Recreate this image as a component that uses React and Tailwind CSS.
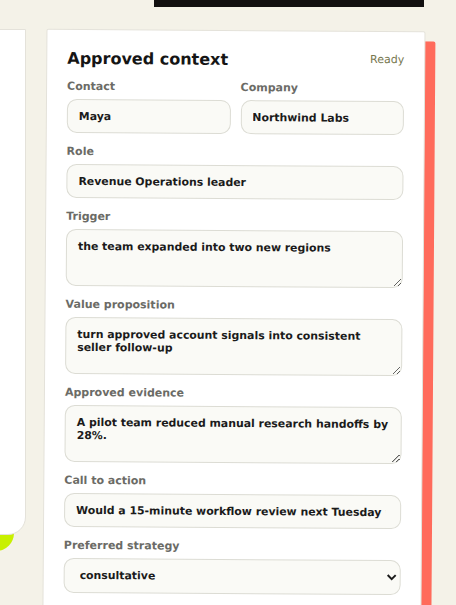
import React from "react";

function Field({ label, children }) {
  return (
    <div className="flex flex-col">
      <label className="block text-[11px] leading-[13px] font-bold text-[#6b6b66] mb-[6px]">{label}</label>
      {children}
    </div>
  );
}

const inputCls =
  "block w-full h-[34px] rounded-[10px] border border-[#dcdcd4] bg-[#fafaf6] pl-[11px] pr-[15px] text-[10.9px] leading-[13px] font-bold text-[#1b1b1b] outline-none";
const areaCls =
  "block w-full h-[57px] rounded-[10px] border border-[#dcdcd4] bg-[#fafaf6] pl-[11px] pr-[7px] py-[10px] text-[10.9px] leading-[13px] font-bold text-[#1b1b1b] outline-none resize-y";

export default function App() {
  return (
    <div className="h-[605px] bg-[#f4f2e8] overflow-hidden font-['DejaVu_Sans',sans-serif]">
      <div className="ml-[154px] w-[270px] h-[7px] bg-[#121010]" />
      <div className="flex items-start mt-[22px]">
        <div className="shrink-0 -ml-[300px] w-[326px] h-[506px] bg-white border border-[#e4e2da] rounded-br-[18px] shadow-[-12px_16px_0_#c8f000]" />
        <div className="shrink-0 ml-[20px] mt-[1px] w-[379px] bg-white border border-[#e4e2da] rounded-[2px] shadow-[10px_10px_0_#ff6b5b] px-[20px] pt-[19px] pb-[40px] rotate-[0.4deg] origin-[50%_70px]">
          <div className="flex justify-between items-start">
            <h2 className="text-[16px] leading-[20px] font-bold text-[#151515]">Approved context</h2>
            <span className="pt-[2px] text-[11px] leading-[13px] text-[#77774f]">Ready</span>
          </div>
          <div className="mt-[11px] flex flex-col gap-[12px]">
            <div className="grid grid-cols-2 gap-[10px]">
              <Field label="Contact">
                <input className={inputCls} defaultValue="Maya" />
              </Field>
              <Field label="Company">
                <input className={inputCls} defaultValue="Northwind Labs" />
              </Field>
            </div>
            <Field label="Role">
              <input className={inputCls} defaultValue="Revenue Operations leader" />
            </Field>
            <Field label="Trigger">
              <textarea className={areaCls} defaultValue="the team expanded into two new regions" />
            </Field>
            <Field label="Value proposition">
              <textarea className={areaCls} defaultValue="turn approved account signals into consistent seller follow-up" />
            </Field>
            <Field label="Approved evidence">
              <textarea className={areaCls} defaultValue="A pilot team reduced manual research handoffs by 28%." />
            </Field>
            <Field label="Call to action">
              <input className={inputCls} defaultValue="Would a 15-minute workflow review next Tuesday work?" />
            </Field>
            <Field label="Preferred strategy">
              <select className="block w-full h-[35px] rounded-[10px] border border-[#dcdcd4] bg-[#fafaf6] px-[11px] text-[10.9px] font-bold text-[#1b1b1b] outline-none" defaultValue="consultative">
                <option value="consultative">consultative</option>
                <option value="direct">direct</option>
                <option value="insight">insight-led</option>
              </select>
            </Field>
          </div>
        </div>
      </div>
    </div>
  );
}
